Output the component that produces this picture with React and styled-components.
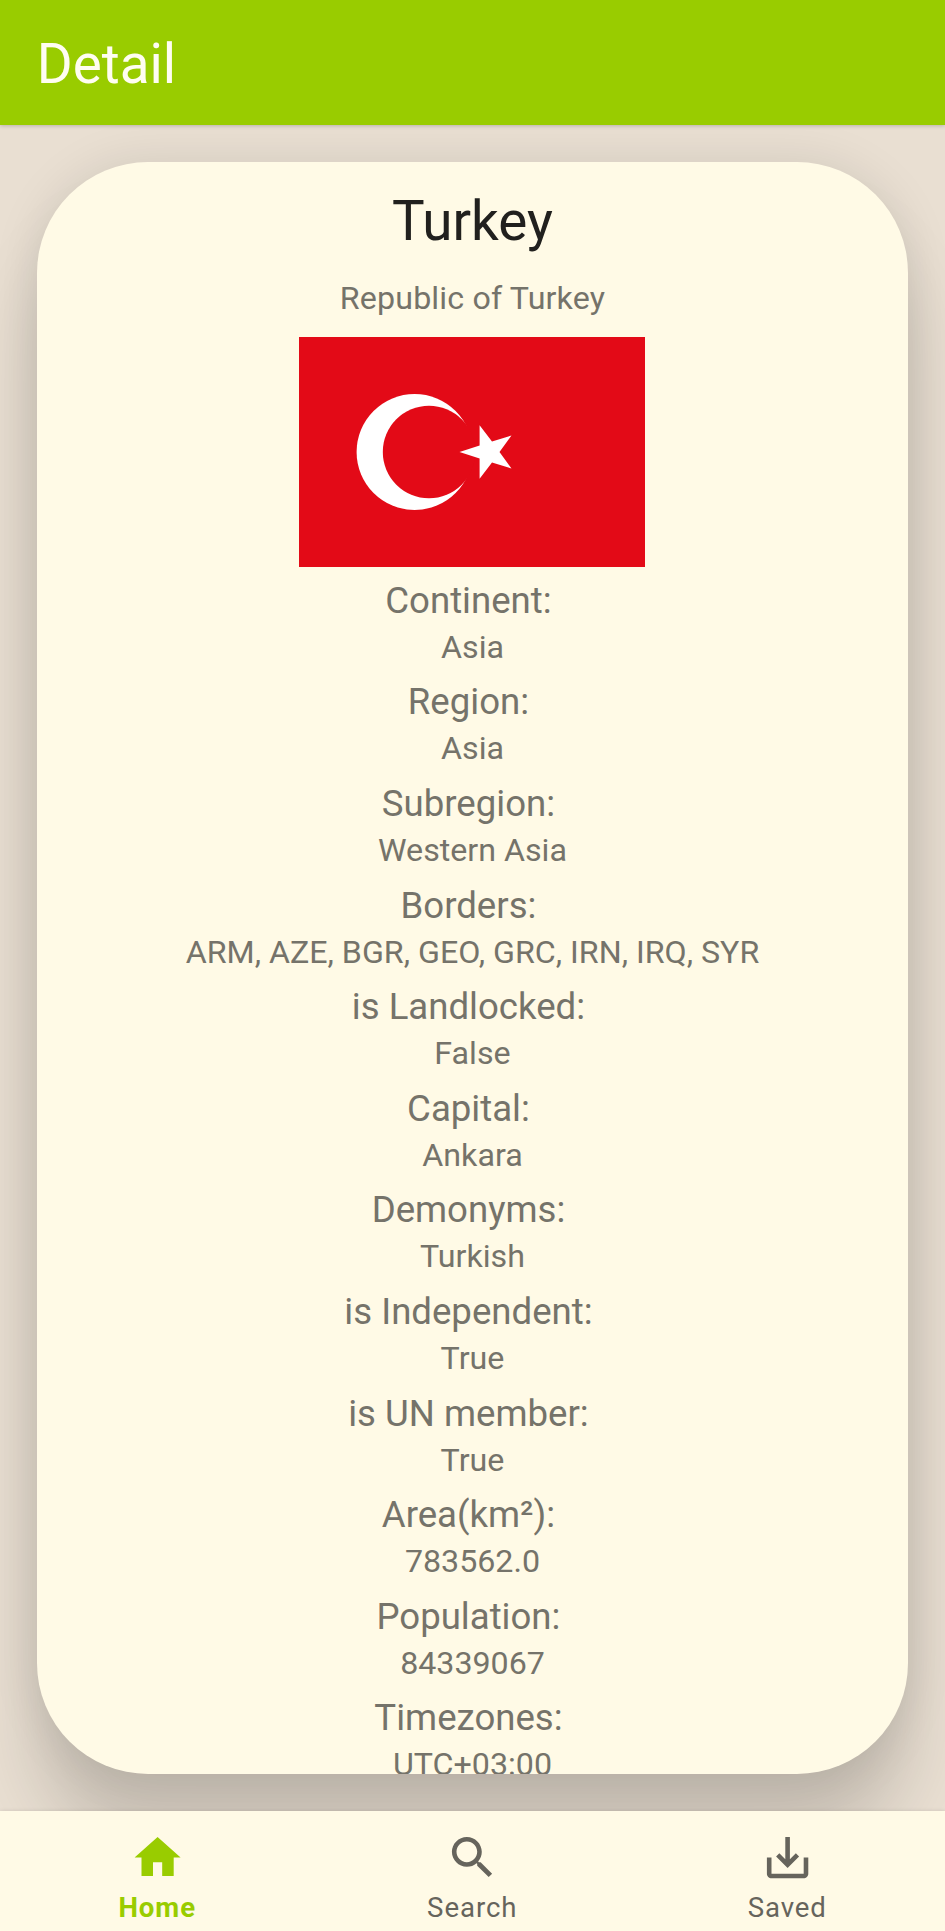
import React from "react";
import styled, { createGlobalStyle } from "styled-components";

const GlobalStyle = createGlobalStyle`
  * { box-sizing: border-box; }
  body { margin: 0; font-family: Roboto, "Noto Sans", sans-serif; }
`;

const Screen = styled.div`
  display: flex;
  flex-direction: column;
  width: 945px;
  height: 1931px;
  overflow: hidden;
  background: #e9dfd2;
`;

const AppBar = styled.header`
  z-index: 1;
  flex: none;
  display: flex;
  align-items: center;
  height: 125.3px;
  padding: 2px 36.8px 0;
  background: #99cc00;
  box-shadow: 0 1px 4px rgba(0, 0, 0, 0.2);
`;

const AppTitle = styled.h1`
  margin: 0;
  font-size: 54.8px;
  font-weight: 400;
  line-height: 66px;
  color: #fffdf2;
`;

const Content = styled.main`
  flex: 1;
  min-height: 0;
  display: flex;
  padding: 36.8px;
`;

const Card = styled.article`
  flex: 1;
  display: flex;
  flex-direction: column;
  align-items: center;
  padding-top: 25.6px;
  overflow: hidden;
  border-radius: 111px;
  background: #fffae6;
  box-shadow:
    0 68px 70px rgba(0, 0, 0, 0.155),
    0 0 48px rgba(0, 0, 0, 0.1);
`;

const CountryName = styled.h2`
  margin: 0 0 22px;
  font-size: 54.8px;
  font-weight: 400;
  line-height: 66px;
  color: #21201e;
`;

const OfficialName = styled.p`
  margin: 0 0 17px;
  font-size: 32.2px;
  line-height: 44px;
  letter-spacing: 0.15px;
  color: #75736a;
`;

const Flag = styled.svg`
  flex: none;
  display: block;
  width: 346px;
  height: 230px;
  margin: 0 1px 8.2px 0;
`;

const Facts = styled.dl`
  margin: 0;
  display: flex;
  flex-direction: column;
  gap: 7px;
  text-align: center;
  color: #75736a;
`;

const FactLabel = styled.dt`
  padding-left: 1px;
  font-size: 36.6px;
  line-height: 51px;
  white-space: pre;
`;

const FactValue = styled.dd`
  margin: 0;
  font-size: 32.2px;
  line-height: 43.6px;
`;

const BottomNav = styled.nav`
  z-index: 1;
  flex: none;
  display: flex;
  height: 120px;
  background: #fffae6;
  box-shadow: 0 0 4px rgba(0, 0, 0, 0.12);
`;

const NavItem = styled.a`
  flex: 1;
  display: flex;
  flex-direction: column;
  align-items: center;
  gap: 6px;
  padding-top: 18.6px;
  padding-right: 0.5px;
  font-size: 27.6px;
  line-height: 34px;
  letter-spacing: 0.0333em;
  font-weight: ${(p) => (p.$active ? 700 : 400)};
  color: ${(p) => (p.$active ? "#99cc00" : "#66645c")};
`;

const NavIcon = styled.svg`
  width: 55.2px;
  height: 55.2px;
  fill: currentColor;
`;

const facts = [
  ["Continent", "Asia"],
  ["Region", "Asia"],
  ["Subregion", "Western Asia"],
  ["Borders", "ARM, AZE, BGR, GEO, GRC, IRN, IRQ, SYR"],
  ["is Landlocked", "False"],
  ["Capital", "Ankara"],
  ["Demonyms", "Turkish"],
  ["is Independent", "True"],
  ["is UN member", "True"],
  ["Area(km²)", "783562.0"],
  ["Population", "84339067"],
  ["Timezones", "UTC+03:00"],
];

const navItems = [
  { label: "Home", active: true, icon: "M10 20v-6h4v6h5v-8h3L12 3 2 12h3v8z" },
  {
    label: "Search",
    icon: "M15.5 14h-.79l-.28-.27C15.41 12.59 16 11.11 16 9.5 16 5.91 13.09 3 9.5 3S3 5.91 3 9.5 5.91 16 9.5 16c1.61 0 3.09-.59 4.23-1.57l.27.28v.79l5 4.99L20.49 19l-4.99-5zm-6 0C7.01 14 5 11.99 5 9.5S7.01 5 9.5 5 14 7.01 14 9.5 11.99 14 9.5 14z",
  },
  {
    label: "Saved",
    icon: "M19 12v7H5v-7H3v7c0 1.1.9 2 2 2h14c1.1 0 2-.9 2-2v-7h-2zm-6 .67l2.59-2.58L17 11.5l-5 5-5-5 1.41-1.41L11 12.67V3h2z",
  },
];

export default function App() {
  return (
    <Screen>
      <GlobalStyle />
      <AppBar>
        <AppTitle>Detail</AppTitle>
      </AppBar>
      <Content>
        <Card>
          <CountryName>Turkey</CountryName>
          <OfficialName>Republic of Turkey</OfficialName>
          <Flag viewBox="0 0 346 230">
            <rect width="346" height="230" fill="#e30a17" />
            <circle cx="115.6" cy="115" r="58" fill="#fff" />
            <circle cx="130" cy="115" r="46.2" fill="#e30a17" />
            <polygon
              fill="#fff"
              points="160.5,115 180.6,108.4 180.6,88.2 193,104.6 212.5,98.4 200.5,115 212.5,131.6 193,125.4 180.6,141.8 180.6,121.6"
            />
          </Flag>
          <Facts>
            {facts.map(([label, value]) => (
              <div key={label}>
                <FactLabel>{label + ": "}</FactLabel>
                <FactValue>{value}</FactValue>
              </div>
            ))}
          </Facts>
        </Card>
      </Content>
      <BottomNav>
        {navItems.map(({ label, icon, active }) => (
          <NavItem key={label} $active={active}>
            <NavIcon viewBox="0 0 24 24">
              <path d={icon} />
            </NavIcon>
            {label}
          </NavItem>
        ))}
      </BottomNav>
    </Screen>
  );
}
